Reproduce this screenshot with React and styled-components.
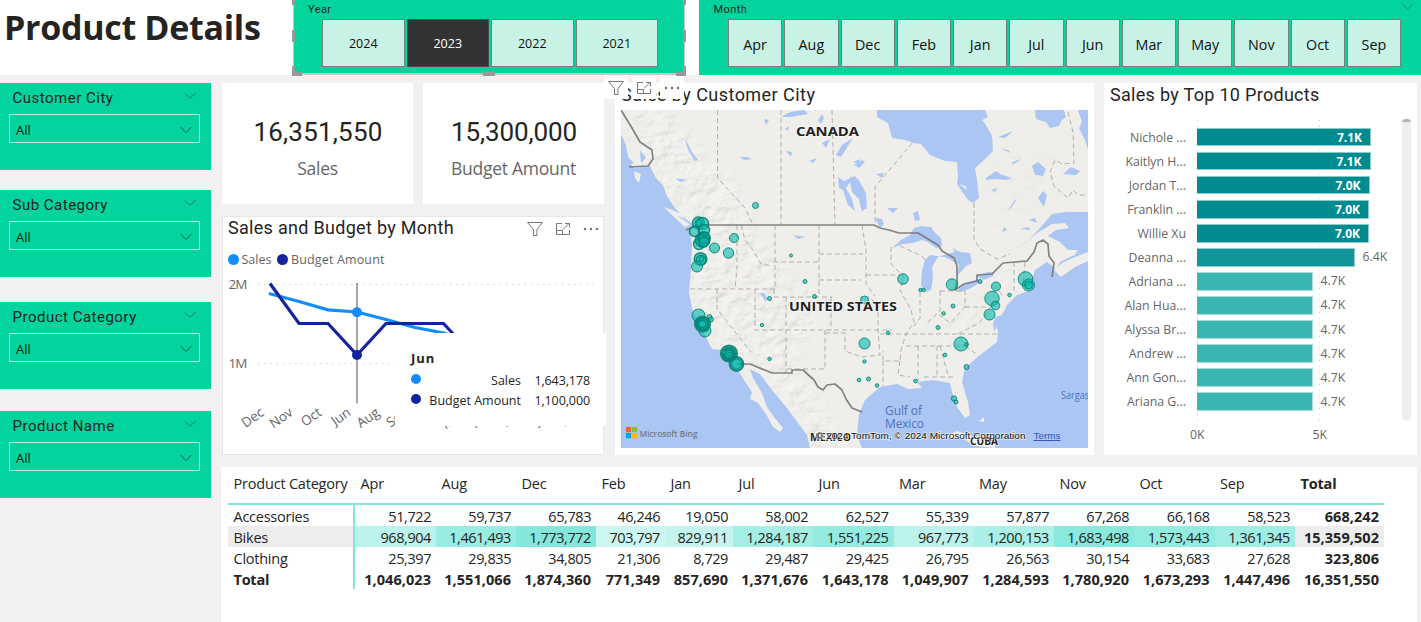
import React from 'react';
import styled, { createGlobalStyle, css } from 'styled-components';

const UI = '"Open Sans", "Noto Sans", sans-serif';
const DIN = 'Roboto, "Open Sans", sans-serif';

const GlobalStyle = createGlobalStyle`
  * { box-sizing: border-box; }
  body { margin: 0; background: #f1f1f1; font-family: ${UI}; color: #252423; }
`;

const Page = styled.div`
  width: 1421px;
  height: 622px;
  overflow: hidden;
  display: flex;
  flex-direction: column;
  gap: 8px;
`;

const Header = styled.header`
  height: 75px;
  flex: none;
  display: flex;
  background: #fff;
`;

const Title = styled.h1`
  margin: 0;
  padding-left: 4px;
  width: 293px;
  font-size: 34px;
  line-height: 55px;
  font-weight: 700;
  letter-spacing: -0.3px;
  white-space: nowrap;
`;

const Slicer = styled.section`
  position: relative;
  background: #03d39c;
  height: 75px;
  padding: ${p => p.$pad};
  width: ${p => p.$width};
  margin-right: ${p => p.$gap || 0};
  ${p => p.$selected && css`
    border: 1px solid #c8c6c4;
    border-top: 0;
    border-bottom-width: 2px;
  `}
`;

const SlicerTitle = styled.div`
  height: 19px;
  font: 11px/19px ${DIN};
  letter-spacing: 0.4px;
  padding-left: ${p => p.$inset};
`;

const Options = styled.div`
  display: grid;
  grid-template-columns: repeat(${p => p.$count}, 1fr);
  gap: 2px;
  height: 48px;
  margin: 0 ${p => p.$right} 0 ${p => p.$left};
`;

const Option = styled.button`
  border: 1.5px solid ${p => (p.$active ? '#4a4a4a' : '#75827e')};
  background: ${p => (p.$active ? '#333' : '#c7f2e5')};
  color: ${p => (p.$active ? '#fff' : '#111')};
  font: ${p => p.$size}px ${UI};
  padding: ${p => p.$drop || 0}px 0 0;
`;

const Handle = styled.i`
  position: absolute;
  width: ${p => p.$w}px;
  height: ${p => p.$h}px;
  left: ${p => p.$x}px;
  top: ${p => p.$y}px;
  background: #999;
`;

const CornerIcon = styled.div`
  position: absolute;
  right: 8px;
  top: 3px;
  display: flex;
`;

const Body = styled.div`
  flex: 1;
  display: flex;
  gap: 11px;
`;

const Sidebar = styled.aside`
  width: 211px;
  flex: none;
`;

const Filter = styled.section`
  height: 87px;
  margin-bottom: ${p => p.$after}px;
  background: #03d39c;
  padding: 0 11px 0 9px;
`;

const FilterHead = styled.div`
  height: 31px;
  display: flex;
  align-items: center;
  justify-content: space-between;
  padding: 0 4px 2px 3.5px;
  font: 15px ${DIN};
  letter-spacing: 0.5px;
  svg { margin-top: -3px; }
`;

const Dropdown = styled.div`
  height: 29px;
  border: 1.5px solid #b3f0df;
  display: flex;
  align-items: center;
  justify-content: space-between;
  padding: 3px 6px 0 6px;
  font-size: 13px;
  color: #111;
`;

const Main = styled.main`
  width: 1195px;
  display: flex;
  flex-direction: column;
  gap: 12px;
`;

const TopRow = styled.div`
  height: 372px;
  display: flex;
  gap: 10px;
`;

const LeftCol = styled.div`
  width: 382px;
  margin-right: 1px;
  display: flex;
  flex-direction: column;
  gap: 12px;
`;

const Kpis = styled.div`
  display: flex;
  gap: 10px;
  height: 121px;
`;

const Kpi = styled.section`
  width: ${p => p.$w}px;
  background: #fff;
  text-align: center;
  padding-top: 33px;
`;

const KpiValue = styled.div`
  font: 26px/32px ${DIN};
  letter-spacing: ${p => p.$ls}px;
  padding-left: 1px;
`;

const KpiLabel = styled.div`
  font-size: 17.5px;
  line-height: 24px;
  margin-top: 8px;
  letter-spacing: -0.25px;
  color: #666;
`;

const Card = styled.section`
  position: relative;
  background: #fff;
  width: ${p => p.$w}px;
  height: ${p => p.$h}px;
  padding: ${p => p.$pad};
  border: ${p => (p.$outlined ? '1px solid #e6e6e6' : '0')};
`;

const CardTitle = styled.h2`
  margin: 0;
  height: ${p => p.$h}px;
  font: 400 18px/${p => p.$lh || 24}px ${DIN};
  letter-spacing: ${p => p.$ls}px;
  white-space: nowrap;
`;

const Tools = styled.div`
  position: absolute;
  left: ${p => p.$x}px;
  top: ${p => p.$y}px;
  display: flex;
  gap: 4px;
`;

const Tool = styled.span`
  width: 24px;
  height: 23px;
  background: #fff;
  display: flex;
  align-items: center;
  justify-content: center;
`;

const Legend = styled.div`
  display: flex;
  align-items: center;
  height: 20px;
  gap: 6px;
  font-size: 12.5px;
  color: #666;
`;

const LegendItem = styled.span`
  display: flex;
  align-items: center;
  gap: 2.5px;
  letter-spacing: ${p => p.$ls || 0}px;
`;

const Dot = styled.i`
  width: ${p => p.$d || 11}px;
  height: ${p => p.$d || 11}px;
  border-radius: 50%;
  background: ${p => p.$c};
`;

const Chart = styled.svg`
  display: block;
  overflow: visible;
  font-family: ${UI};
`;

const TrendFrame = styled.div`
  padding-top: 1px;
  margin-left: -2px;
`;

const Tooltip = styled.div`
  position: absolute;
  left: 172px;
  top: 116px;
  width: 211px;
  height: 93px;
  background: #fff;
  padding: 14px 16px 0 16px;
  font-size: 12.5px;
`;

const TooltipTitle = styled.div`
  font: 700 13px/22px ${UI};
  letter-spacing: 0.9px;
`;

const TooltipRow = styled.div`
  display: grid;
  grid-template-columns: 10px 100px 1fr;
  align-items: center;
  height: 20px;
  padding-top: 2px;
  text-align: right;
  white-space: nowrap;
  ${Dot} { margin-top: -3px; }
`;

const TooltipValue = styled.span`
  letter-spacing: -0.1px;
`;

const Plot = styled.div`
  display: flex;
  flex-direction: column;
`;

const BarsPlot = styled.div`
  width: 287px;
  height: 303px;
  padding-top: 5px;
  background:
    repeating-linear-gradient(#ccc 0 1px, transparent 1px 6px) 87px 0 / 1px 100% no-repeat,
    repeating-linear-gradient(#ccc 0 1px, transparent 1px 6px) 209px 0 / 1px 100% no-repeat;
`;

const BarRow = styled.div`
  height: 24.07px;
  display: flex;
  align-items: center;
  font-size: 12.3px;
  color: #666;
`;

const BarName = styled.div`
  width: 76px;
  margin-right: 11px;
  text-align: right;
  white-space: nowrap;
`;

const Bar = styled.div`
  width: ${p => p.$w}px;
  height: 18.6px;
  border: 1px solid rgba(255, 255, 255, 0.55);
  border-left: 0;
  background: ${p => p.$c};
  color: #fff;
  font-weight: 700;
  font-size: 12px;
  display: flex;
  align-items: center;
  justify-content: flex-end;
  padding-right: 8px;
`;

const BarValue = styled.span`
  margin: -1px 0 0 8px;
`;

const Axis = styled.div`
  display: flex;
  gap: 108px;
  padding: 3px 0 0 80px;
  font-size: 12.3px;
  line-height: 18px;
  color: #666;
`;

const Scroll = styled.div`
  position: absolute;
  right: 6px;
  top: 36px;
  width: 9px;
  height: 302px;
  border-radius: 4px 4px 5px 5px;
  background: #eee;
  overflow: hidden;
  &::before {
    content: '';
    display: block;
    height: 3px;
    background: #b5b5b5;
  }
`;

const TableCard = styled.section`
  flex: 1;
  width: 1196px;
  margin-left: -1px;
  background: #fff;
  padding-left: 7px;
`;

const Table = styled.table`
  width: 1156px;
  table-layout: fixed;
  border-collapse: separate;
  border-spacing: 0;
  font-size: 14.5px;
`;

const Th = styled.th`
  height: 38px;
  border-bottom: 2px solid #83e8db;
  padding: 0 0 4px 5.5px;
  text-align: left;
  letter-spacing: -0.2px;
  font-weight: ${p => (p.$bold ? 700 : 400)};
  white-space: nowrap;
`;

const Td = styled.td`
  height: 21px;
  padding: 2px 5px 0 0;
  line-height: 18px;
  text-align: right;
  white-space: nowrap;
  letter-spacing: ${p => (p.$bold ? 0.05 : -0.42)}px;
  font-weight: ${p => (p.$bold ? 700 : 400)};
  background: ${p => p.$bg || 'transparent'};
  ${p => p.$head && css`
    text-align: left;
    padding: 2px 0 0 5.5px;
    letter-spacing: -0.25px;
    border-right: 2px solid #83e8db;
  `}
`;

const Chevron = ({ color = '#14866b', w = 12 }) => (
  <svg width={w} height="8" viewBox="0 0 12 8" fill="none" stroke={color} strokeWidth="1">
    <path d="M0.5 1 L6 6.5 L11.5 1" />
  </svg>
);

const FunnelIcon = () => (
  <svg width="18" height="16" viewBox="0 0 18 16" fill="none" stroke="#777" strokeWidth="1">
    <path d="M1.5 1.5 H16.5 L11 8.5 V14.5 H7.5 V8.5 Z" />
  </svg>
);

const FocusIcon = () => (
  <svg width="16" height="14" viewBox="0 0 16 14" fill="none" stroke="#777" strokeWidth="1">
    <path d="M7 1.5 H1.5 V12.5 H14.5 V8 M1.5 8.5 H7.5 V12.5 M8 7.5 L14 1.5 M10 1.5 H14.5 V5.5" />
  </svg>
);

const MoreIcon = () => (
  <svg width="16" height="4" viewBox="0 0 16 4" fill="#777">
    <circle cx="2" cy="2" r="1.3" /><circle cx="8" cy="2" r="1.3" /><circle cx="14" cy="2" r="1.3" />
  </svg>
);

const VisualTools = ({ x, y }) => (
  <Tools $x={x} $y={y}>
    <Tool><FunnelIcon /></Tool>
    <Tool><FocusIcon /></Tool>
    <Tool><MoreIcon /></Tool>
  </Tools>
);

const filters = [['Customer City', 20], ['Sub Category', 25], ['Product Category', 22], ['Product Name', 0]];
const months = ['Apr', 'Aug', 'Dec', 'Feb', 'Jan', 'Jul', 'Jun', 'Mar', 'May', 'Nov', 'Oct', 'Sep'];
const handles = [
  [-2, 0, 3, 5], [-2, 30, 3, 12], [-2, 66, 3, 10], [-2, 72, 10, 4], [189, 72, 12, 4],
  [382, 72, 10, 4], [389, 66, 3, 10], [389, 30, 3, 12], [389, 0, 3, 5],
];

const trendMonths = ['Dec', 'Nov', 'Oct', 'Jun', 'Aug', 'Sep', 'Jul', 'May', 'Mar', 'Apr', 'Jan', 'Feb'];

const Trend = () => (
  <Chart width="376" height="180" viewBox="226 270 376 180">
    <g stroke="#c8c8c8" strokeDasharray="1.2 5" strokeWidth="1.2">
      <path d="M258 284.5 H597 M258 363.5 H597" />
    </g>
    <g fontSize="13.5" fill="#666">
      <text x="228.5" y="289" textLength="19">2M</text>
      <text x="228.5" y="368" textLength="19">1M</text>
      {trendMonths.map((m, i) => (
        <text key={m} textAnchor="end" transform={`translate(${265 + i * 28.9} 414.5) rotate(-35)`}>{m}</text>
      ))}
    </g>
    <path d="M357 283 V403.5" stroke="#777" strokeWidth="1.3" />
    <g fill="none" strokeWidth="3.2">
      <path stroke="#118dff" d="M269 293.5 L299 301.5 L328 309.8 L357 312 L386 319.5 L415 327.5 L444 333 L473 345" />
      <path stroke="#12239e" d="M270 283.5 L299 323.5 H328 L357 355 L386 323.5 H443.5 L473 355" />
    </g>
    <circle cx="357" cy="312.3" r="5" fill="#118dff" />
    <circle cx="357" cy="355" r="5" fill="#12239e" />
  </Chart>
);

/* x, y, radius, and a ring weight for stacked cities */
const bubbles = [
  [755.5, 205.5, 3], [734, 238, 4.5], [714.5, 248, 5], [728.5, 253, 5.2], [791, 255.5, 1.5],
  [698.5, 223, 6, 1.6], [702.5, 223.5, 6, 1.6], [698.5, 223, 3.5], [694.5, 231.5, 5, 1.6], [704, 230, 5.5, 1.6],
  [699, 244, 5.5, 1.4], [702.5, 240, 7, 1.8], [704, 238, 6, 2], [703, 238.5, 4], [703.5, 237.5, 1.5], [704, 242, 5, 1.6],
  [700.5, 259, 6.3, 1.6], [701, 260, 4.8, 1.4], [701.5, 259, 2.5], [697, 266.5, 5.5],
  [805, 281.5, 2], [814.5, 296.5, 2], [769.5, 298.5, 2], [762, 325, 1.7], [769.5, 359, 1.7],
  [698.5, 315.5, 6.5], [709.5, 317, 2.5], [711, 319.5, 2.5], [705, 331, 6], [702.5, 324, 7.6, 2], [702.5, 324, 5.8, 2],
  [702.3, 324, 3.8, 1.4], [729, 353.5, 8, 2.2], [729, 354, 6, 2.4], [729, 354, 4, 1.6], [729.5, 354, 2], [724, 352, 2.5],
  [736.5, 364, 6.8, 2.2], [736.5, 364, 5],
  [903, 279, 5.3], [952, 284.5, 5.7], [980, 281.5, 2], [996, 286.5, 4.5], [1025.5, 279, 7.3], [1028.5, 285, 6],
  [1028.5, 285, 4], [1009.5, 295, 1.8], [992, 298.5, 7.2], [995.5, 305.5, 4.3], [989.5, 314.5, 5.5], [953, 306, 2],
  [943.5, 313.5, 1.8], [938, 327.5, 2], [864.5, 300, 4], [920.5, 290, 1.7], [923.5, 290, 1.7], [888, 333, 1.8],
  [864.5, 343.5, 5.5], [961, 344, 7], [966.5, 344.5, 1.8], [945, 355, 1.8], [966.5, 367, 2.5], [864.5, 361.5, 1.7],
  [859, 380, 1.8], [868.5, 379, 2], [877, 385.5, 1.8], [915.5, 381, 1.8], [954, 398.5, 2.7], [956, 402, 2],
];

const CityMap = () => (
  <Chart width="467" height="337.5" viewBox="621 110 467 337.5">
    <defs>
      <clipPath id="frame"><rect x="621" y="110" width="467" height="338" /></clipPath>
      <filter id="relief" x="0" y="0" width="100%" height="100%">
        <feTurbulence type="fractalNoise" baseFrequency="0.07 0.1" numOctaves="4" seed="8" />
        <feDiffuseLighting surfaceScale="2.8" lightingColor="#fff"><feDistantLight azimuth="225" elevation="66" /></feDiffuseLighting>
      </filter>
      <filter id="soft"><feGaussianBlur stdDeviation="9" /></filter>
      <mask id="ranges">
        <g filter="url(#soft)" fill="#fff">
          <path d="M621 100 L665 105 L735 185 L765 250 L815 300 L815 345 L790 360 L850 447 L820 447 L760 370 L715 340 L690 295 L695 240 L650 180 Z" />
          <path d="M925 340 L985 285 L1030 255 L1040 240 L1020 270 L960 340 L935 350 Z" opacity=".6" />
          <path d="M1000 130 L1080 140 L1040 220 L990 240 Z" opacity=".25" />
        </g>
      </mask>
      <clipPath id="land">
        <path id="landShape" d="M621 110 L621 134 L626 145 L628 160 L634 168 L650 166 L656 178 L663 185 L667 196 L675 208 L686 219 L694 225 L690 232 L692 245 L691 270 L689 292 L692 308 L698 322 L705 335 L712 349 L723 350 L730 360 L738 370 L744 380 L752 392 L750 399 L758 403 L766 414 L773 427 L780 432 L783 428 L774 417 L767 407 L762 393 L753 378 L750 369 L760 374 L772 390 L787 408 L798 423 L807 435 L810 448 L862 448 L857 435 L859 414 L865 400 L880 387 L897 384 L908 389 L922 388 L917 382 L933 380 L950 383 L952 392 L957 407 L965 418 L970 415 L968 402 L962 382 L965 368 L980 355 L997 342 L998 332 L995 317 L1002 315 L1007 305 L1017 295 L1032 290 L1032 280 L1035 270 L1047 262 L1056 269 L1060 262 L1072 256 L1088 252 L1088 110 Z" />
      </clipPath>
    </defs>
    <g clipPath="url(#frame)">
      <rect x="621" y="110" width="467" height="338" fill="#abc6f2" />
      <use href="#landShape" fill="#efeeea" />
      <g clipPath="url(#land)">
        <g mask="url(#ranges)" opacity=".65">
          <rect x="621" y="110" width="467" height="338" filter="url(#relief)" />
          <rect x="621" y="110" width="467" height="338" fill="#e9e6de" opacity=".3" />
        </g>
      </g>
      <g fill="#efeeea">
        <path d="M634 171 L641 174 L639 183 L635 178 Z M664 207 L680 213 L690 225 L685 227 L673 216 Z M1054 270 L1062 263 L1075 257 L1088 252 L1088 261 L1075 267 L1061 277 Z M1067 216 L1079 218 L1086 223 L1078 223 Z M944 437 L957 431 L975 437 L995 444 L995 448 L975 446 L962 438 Z M981 401 l3 -1 M979 421 l5 -4 v5 z M851 421 L856 430 L850 447 H843 L845 433 Z" />
      </g>
      <g fill="#abc6f2">
        <path d="M877 110 L877 117 L888 123 L892 138 L905 140 L914 143 L921 144 L930 155 L945 161 L957 162 L958 176 L957 184 L968 200 L973 203 L979 198 L977 180 L975 168 L984 160 L993 151 L992 136 L986 125 L982 120 L988 117 L985 110 Z" />
        <path d="M1035 110 L1036 119 L1046 122 L1050 128 L1059 126 L1062 120 L1066 117 L1064 110 Z M1078 110 L1082 122 L1079 128 L1085 140 L1088 149 V110 Z" />
        <path d="M1006 253 L1028 241 L1040 228 L1052 214 L1066 212 L1088 212 V252 L1074 256 L1078 250 L1068 250 L1060 242 L1048 236 L1056 230 L1069 228 L1065 223 L1052 224 L1037 233 L1027 242 Z" />
        <path d="M892 248 L901 240 L910 235 L914 228 L921 226 L931 227 L935 233 L941 238 L942 246 L936 248 L928 242 L922 240 L913 243 L903 244 Z" />
        <path d="M930 255 L925 260 L922 271 L921 285 L925 292 L931 290 L933 278 L932 267 L938 257 L944 255 L955 252 L952 248 L960 252 L970 253 L972 263 L966 266 L957 276 L959 265 L951 260 L944 257 Z" />
        <path d="M957 291 L966 283 L978 279 L981 282 L971 288 L961 292 Z M976 276 L988 272 L994 272 L993 276 L984 280 Z" />
        <path d="M838 177 L844 181 L855 176 L860 186 L862 194 L866 207 L862 212 L859 199 L852 192 L850 182 L846 188 L852 199 L855 211 L848 205 L843 190 L839 188 Z" />
        <path d="M850 176 L858 179 L866 193 L867 209 L861 208 L858 191 Z M836 155 L842 145 L853 138 L848 146 L841 157 Z M764 119 L769 120 L766 125 Z M781 117 L790 112 L804 110 L808 114 L791 117 Z M822 143 L830 139 L826 148 Z M785 129 l4 -3 -1 5z M685 140 l2 2 5 10 6 8 -3 1 -7 -11z M740 157 l7 0 5 2 -8 1z M809 161 l8 -3 -4 5z M786 151 l6 1 -1 5z M818 120 l4 -6 2 4 -3 6z M854 165 l8 -5 3 2 -6 6z" />
        <path d="M986 178 l10 -7 4 3 12 4 -6 2 -11 -1 -9 1z M998 137 l15 -6 -8 7z M1001 149 l7 1 3 3z M1011 163 l12 -5 -9 6z M1032 166 l6 -4 8 7 -3 7 -8 -1z M1063 174 l8 -7 9 4 -4 4z M1038 198 l5 -7 4 4 -3 12z M1008 211 l6 -10 3 -2 -6 9z M1002 232 l2 -5 3 3z M1020 229 l8 -2 3 3z M1029 220 l6 -2 2 5z M991 190 l6 -2 -2 4z" />
        <path d="M887 208 l11 0 -5 5z M913 213 l5 -2 2 9 -5 1z M876 174 l8 -1 -2 5z M875 218 l7 1 2 5 -4 4z M760 293 l4 0 4 7 -3 1z M793 235 l12 2 -7 2z M853 162 l7 -3 -1 5z" />
        <path d="M621 145 l6 6 1 6 6 6 -10 4 -3 -8z M640 150 l6 8 -5 5z M675 178 l12 2 -7 2z M677 216 l8 3 5 5z M995 316 l2 10 -3 6 -1 -8z" />
      </g>
      <path d="M959 184 l7 2 1 4z" fill="#efeeea" />
      <g fill="none" stroke="#b3b0ab" strokeWidth="1" strokeDasharray="5 3">
        <path d="M717.5 110 V178 L735 197 L745 208 L753 225 M781 110 V225 M832 110 L835 225 M875 222 V187 L913 142 M974 203 V239 L980 249 L997 259 L1010 254 M1068 112 L1073 132 L1074 163 L1062 164 L1055 160 L1050 172 L1054 186 L1068 198 L1073 190 L1078 195 H1088" />
        <path d="M737 225 V268 L735 289 M690 289 H775 V225 M741 225 L745 240 L753 250 L761 264 L773 266 M773 262 H819 M819 225 V297 M774 289 V297 H832 M717 289 V309 L751 352 M755 289 V330 H892 M786 297 V373 M831 297 V330 M819 254 H863 M862 225 L866 250 V284 L875 296 M819 280 H861 M825 330 V369 H787 M825 333 H845 V351 L862 357 L880 355 L878 330 V305 L868 296 M866 275 H903 M891 247 L891 264 L904 277 L900 290 L911 310 L914 322 L906 334 L901 350 L900 361 H883 V351 M880 334 H997 M906 346 H966 M918 346 V381 M937 346 V375 M924 377 H956 M940 346 L948 375 M920 292 V318 L914 326 M940 291 V311 L927 323 M940 291 H965 V307 L950 323 L939 315 M965 307 H996 M958 334 L979 323 L989 311 M965 346 L978 355 M900 246 L922 256 L925 260 M1014 262 V290 L1018 292 M1025 262 L1023 286 M994 285 L1003 296 M883 361 V386 M900 361 L898 375 L910 377" />
      </g>
      <g fill="none" stroke="#777" strokeWidth="1.7" strokeLinejoin="round" opacity=".9">
        <path d="M621 110 L632 128 L640 142 L652 150 L653 159 L648 166 L629 167" />
        <path d="M686 230 L698 225 H874 L880 228 L889 230 L899 233 L918 233 L938 245 L942 251 L954 258 L957 266 L957 282 L955 290 L964 284 L977 281 L977 275 L992 274 L1003 263 L1027 261 L1034 252 L1037 243 L1043 240 L1048 244 L1049 256 L1054 263 L1052 277" />
        <path d="M737 364 L750 364 L772 373 H792 V370 H803 L814 380 L818 387 L823 390 L827 385 L835 384 L842 390 L846 399 L852 408 L862 412" />
      </g>
      <g fill="#01b8aa" fillOpacity=".6" stroke="#007f70" strokeOpacity=".85">
        {bubbles.map(([x, y, r, ring = 1], i) => <circle key={i} cx={x} cy={y} r={r} strokeWidth={ring} />)}
      </g>
      <g fontWeight="700" fill="#222" stroke="#fff" strokeOpacity=".7" strokeWidth="1.6" paintOrder="stroke" lengthAdjust="spacingAndGlyphs">
        <text x="796" y="136" fontSize="13" textLength="63" lengthAdjust="spacingAndGlyphs">CANADA</text>
        <text x="789" y="310.5" fontSize="13" textLength="108" lengthAdjust="spacingAndGlyphs">UNITED STATES</text>
        <text x="810" y="441" fontSize="10.5" textLength="41" lengthAdjust="spacingAndGlyphs">MEXICO</text>
        <text x="970" y="445" fontSize="10" textLength="28" lengthAdjust="spacingAndGlyphs">CUBA</text>
      </g>
      <g fill="#4d72c0" fontSize="12">
        <text x="885" y="415" textLength="37">Gulf of</text>
        <text x="885" y="428" textLength="39">Mexico</text>
        <text x="1061" y="399" fontSize="10.5" textLength="38" lengthAdjust="spacingAndGlyphs">Sargasso</text>
      </g>
      <path fill="#f0603a" d="M626 427 h5.2 v5.2 h-5.2z" />
      <path fill="#85c232" d="M632 427 h5.2 v5.2 h-5.2z" />
      <path fill="#00a4ef" d="M626 433 h5.2 v5.2 h-5.2z" />
      <path fill="#ffb900" d="M632 433 h5.2 v5.2 h-5.2z" />
      <text x="639.5" y="436.5" fontSize="9.5" fontWeight="600" fill="#727a8a" textLength="58" lengthAdjust="spacingAndGlyphs">Microsoft Bing</text>
      <g fontFamily="Liberation Sans, sans-serif" fontSize="9.8">
        <text x="816" y="439" textLength="209.5" lengthAdjust="spacingAndGlyphs" fill="#111" stroke="#fff" strokeWidth="1.5" strokeOpacity=".6" paintOrder="stroke">© 2024 TomTom, © 2024 Microsoft Corporation</text>
        <text x="1033.5" y="439" textLength="27" fill="#3355b5" textDecoration="underline">Terms</text>
      </g>
    </g>
  </Chart>
);

const products = [
  ['Nichole ...', 174, '7.1K'], ['Kaitlyn H...', 173.5, '7.1K'], ['Jordan T...', 172.5, '7.0K'],
  ['Franklin ...', 172, '7.0K'], ['Willie Xu', 172, '7.0K'], ['Deanna ...', 157.5, '6.4K'],
  ['Adriana ...', 115.5, '4.7K'], ['Alan Hua...', 115.5, '4.7K'], ['Alyssa Br...', 115.5, '4.7K'],
  ['Andrew ...', 115.5, '4.7K'], ['Ann Gon...', 115.5, '4.7K'], ['Ariana G...', 115.5, '4.7K'],
];
const barColor = w => (w > 160 ? '#008c8f' : w > 120 ? '#109699' : '#3ab5b2');

const columns = [127, 81, 80, 80, 69, 68, 80, 80.5, 80, 80.5, 80, 80.5, 80.5, 89];
const rows = [
  ['Accessories', [51722, 59737, 65783, 46246, 19050, 58002, 62527, 55339, 57877, 67268, 66168, 58523], 668242],
  ['Bikes', [968904, 1461493, 1773772, 703797, 829911, 1284187, 1551225, 967773, 1200153, 1683498, 1573443, 1361345], 15359502],
  ['Clothing', [25397, 29835, 34805, 21306, 8729, 29487, 29425, 26795, 26563, 30154, 33683, 27628], 323806],
  ['Total', [1046023, 1551066, 1874360, 771349, 857690, 1371676, 1643178, 1049907, 1284593, 1780920, 1673293, 1447496], 16351550],
];
const fmt = n => n.toLocaleString('en-US');
const heat = v => {
  const t = v / 1773772;
  const mix = c => Math.round(255 + (c - 255) * t);
  return `rgb(${mix(131)},${mix(232)},${mix(219)})`;
};

export default function App() {
  return (
    <Page>
      <GlobalStyle />
      <Header>
        <Title>Product Details</Title>
        <Slicer $width="392px" $pad="0" $gap="14px" $selected>
          <SlicerTitle $inset="14px">Year</SlicerTitle>
          <Options $count={4} $left="28px" $right="26px">
            {['2024', '2023', '2022', '2021'].map(y => (
              <Option key={y} $size={12.5} $active={y === '2023'}>{y}</Option>
            ))}
          </Options>
          {handles.map(([x, y, w, h], i) => <Handle key={i} $x={x} $y={y} $w={w} $h={h} />)}
        </Slicer>
        <Slicer $width="722px" $pad="0">
          <SlicerTitle $inset="14.5px">Month</SlicerTitle>
          <Options $count={12} $left="29px" $right="20px">
            {months.map(m => <Option key={m} $size={14.3} $drop={2}>{m}</Option>)}
          </Options>
          <CornerIcon><Chevron w={11} /></CornerIcon>
        </Slicer>
      </Header>
      <Body>
        <Sidebar>
          {filters.map(([name, after]) => (
            <Filter key={name} $after={after}>
              <FilterHead>{name}<Chevron /></FilterHead>
              <Dropdown>All<Chevron w={14} color="#0b5c49" /></Dropdown>
            </Filter>
          ))}
        </Sidebar>
        <Main>
          <TopRow>
            <LeftCol>
              <Kpis>
                <Kpi $w={191}>
                  <KpiValue $ls={0.2}>16,351,550</KpiValue>
                  <KpiLabel>Sales</KpiLabel>
                </Kpi>
                <Kpi $w={181}>
                  <KpiValue $ls={-0.1}>15,300,000</KpiValue>
                  <KpiLabel>Budget Amount</KpiLabel>
                </Kpi>
              </Kpis>
              <Card $w={382} $h={239} $pad="0 0 0 5px" $outlined>
                <CardTitle $h={32} $lh={22} $ls={0.3}>Sales and Budget by Month</CardTitle>
                <VisualTools x={300} y={0} />
                <Legend>
                  <LegendItem>
                    <Dot $c="#118dff" />Sales
                  </LegendItem>
                  <LegendItem $ls={0.15}>
                    <Dot $c="#12239e" />Budget Amount
                  </LegendItem>
                </Legend>
                <TrendFrame><Trend /></TrendFrame>
                <Tooltip>
                  <TooltipTitle>Jun</TooltipTitle>
                  <TooltipRow><Dot $d={10} $c="#118dff" /><span>Sales</span><TooltipValue>1,643,178</TooltipValue></TooltipRow>
                  <TooltipRow><Dot $d={10} $c="#12239e" /><span>Budget Amount</span><TooltipValue>1,100,000</TooltipValue></TooltipRow>
                </Tooltip>
              </Card>
            </LeftCol>
            <Card $w={479} $h={372} $pad="0 0 0 6px">
              <CardTitle $h={27} $ls={0.45}>Sales by Customer City</CardTitle>
              <CityMap />
              <VisualTools x={-11} y={-7} />
            </Card>
            <Card $w={313} $h={372} $pad="0 0 0 6px">
              <CardTitle $h={37} $ls={0.3}>Sales by Top 10 Products</CardTitle>
              <Plot>
                <BarsPlot>
                  {products.map(([name, w, value]) => (
                    <BarRow key={name}>
                      <BarName>{name}</BarName>
                      <Bar $w={w} $c={barColor(w)}>{w > 160 && value}</Bar>
                      {w <= 160 && <BarValue>{value}</BarValue>}
                    </BarRow>
                  ))}
                </BarsPlot>
                <Axis><span>0K</span><span>5K</span></Axis>
              </Plot>
              <Scroll />
            </Card>
          </TopRow>
          <TableCard>
            <Table>
              <colgroup>{columns.map((w, i) => <col key={i} width={w} />)}</colgroup>
              <thead>
                <tr>
                  <Th>Product Category</Th>
                  {months.map(m => <Th key={m}>{m}</Th>)}
                  <Th $bold>Total</Th>
                </tr>
              </thead>
              <tbody>
                {rows.map(([name, values, total]) => {
                  const bold = name === 'Total';
                  const shade = name === 'Bikes' ? '#ededed' : undefined;
                  return (
                    <tr key={name}>
                      <Td $head $bold={bold} $bg={shade}>{name}</Td>
                      {values.map((v, i) => <Td key={i} $bold={bold} $bg={bold ? undefined : heat(v)}>{fmt(v)}</Td>)}
                      <Td $bold $bg={shade}>{fmt(total)}</Td>
                    </tr>
                  );
                })}
              </tbody>
            </Table>
          </TableCard>
        </Main>
      </Body>
    </Page>
  );
}
